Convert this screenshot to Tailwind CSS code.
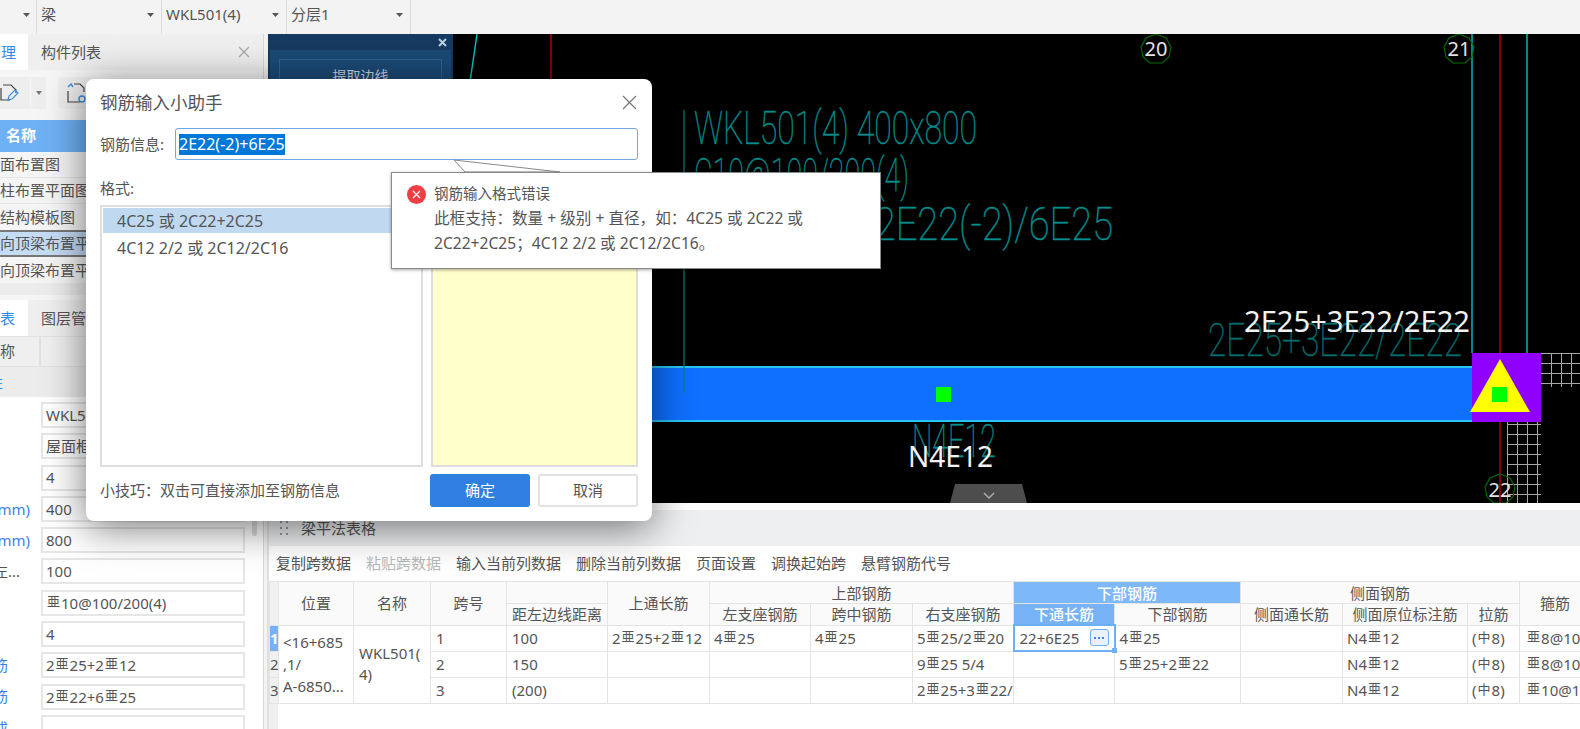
<!DOCTYPE html>
<html lang="zh-CN">
<head>
<meta charset="UTF-8">
<title>钢筋输入小助手</title>
<script src="https://cdn.jsdelivr.net/npm/@tailwindcss/browser@4"></script>
</head>
<body class="m-0 bg-white">
<div class="relative w-[1580px] h-[729px] overflow-hidden flex flex-col bg-[#f3f3f3] text-[#555] text-[15px] [font-family:'Noto_Sans','Noto_Sans_CJK_SC',sans-serif]">

  <!-- top selectors -->
  <div class="h-[34px] shrink-0 flex bg-[#f3f3f3] pl-[36px]">
    <div class="w-[125px] border-l border-[#dcdcdc] flex items-center justify-between pl-[4px] pr-[7px] pb-[5px]"><span>梁</span><svg width="7" height="4" viewBox="0 0 7 4"><path d="M0 0h7L3.5 4z" fill="#555"/></svg></div>
    <div class="w-[125px] border-l border-[#dcdcdc] flex items-center justify-between pl-[4px] pr-[7px] pb-[5px]"><span>WKL501(4)</span><svg width="7" height="4" viewBox="0 0 7 4"><path d="M0 0h7L3.5 4z" fill="#555"/></svg></div>
    <div class="w-[125px] border-x border-[#dcdcdc] flex items-center justify-between pl-[4px] pr-[7px] pb-[5px]"><span>分层1</span><svg width="7" height="4" viewBox="0 0 7 4"><path d="M0 0h7L3.5 4z" fill="#555"/></svg></div>
    <svg class="absolute left-[23px] top-[13px]" width="7" height="4" viewBox="0 0 7 4"><path d="M0 0h7L3.5 4z" fill="#555"/></svg>
  </div>

  <div class="flex-1 flex min-h-0">
    <!-- left panel -->
    <aside class="w-[264px] shrink-0 flex flex-col bg-[#f5f5f5] border-r border-[#d8d8d8] overflow-hidden">
      <div class="h-[36px] shrink-0 flex items-center bg-[#efefef]">
        <div class="w-[28px] h-full bg-white flex items-center justify-end text-[#2e8be8] pr-[13px] overflow-hidden"><span class="-mr-[1px]">理</span></div>
        <span class="ml-[13px] flex-1">构件列表</span>
        <svg class="mr-[13px]" width="12" height="12" viewBox="0 0 12 12"><path d="M1 1l10 10M11 1L1 11" stroke="#aaa" stroke-width="1.3"/></svg>
      </div>
      <div class="h-[50px] shrink-0 flex items-center gap-[1px] bg-[#f5f5f5] pb-[4px]">
        <div class="w-[30px] h-[32px] bg-[#eee] flex items-center justify-end pr-[11px]">
          <svg width="19" height="18" viewBox="0 0 19 18" fill="none"><path d="M1 4v12h9M3 1h8l5 5v3" stroke="#444" stroke-width="1.2"/><path d="M8 16l1-4 6-6 3 3-6 6z" stroke="#3d8fe0" stroke-width="1.2"/></svg>
        </div>
        <div class="w-[15px] h-[32px] bg-[#eee] flex items-center justify-center"><svg width="6" height="4" viewBox="0 0 6 4"><path d="M0 0h6L3 4z" fill="#777"/></svg></div>
        <div class="ml-[11px] w-[40px] h-[32px] bg-[#eee] rounded-sm flex items-center pl-[9px]">
          <svg width="20" height="20" viewBox="0 0 20 20" fill="none"><path d="M1 8v11h12M7 1h6l4 4v4" stroke="#444" stroke-width="1.2"/><path d="M1 4l3-3 2 3" stroke="#3d8fe0" stroke-width="1.4"/><circle cx="15" cy="16" r="3" stroke="#3d8fe0" stroke-width="1.4"/></svg>
        </div>
      </div>
      <div class="h-[32px] shrink-0 bg-[#6fb1f5] text-white font-bold flex items-center pl-[6px] pb-[2px]">名称</div>
      <div class="h-[26px] shrink-0 flex items-center whitespace-nowrap border-b border-[#e6e6e6]">面布置图</div>
      <div class="h-[26px] shrink-0 flex items-center whitespace-nowrap border-b border-[#e6e6e6]">柱布置平面图</div>
      <div class="h-[26px] shrink-0 flex items-center whitespace-nowrap">结构模板图</div>
      <div class="h-[27px] shrink-0 flex items-center whitespace-nowrap bg-[#c5dcf5] border-y-2 border-[#777]">向顶梁布置平面图</div>
      <div class="h-[26px] shrink-0 flex items-center whitespace-nowrap">向顶梁布置平面图</div>
      <div class="h-[12px] shrink-0 bg-[#ececec]"></div>
      <div class="h-[36px] shrink-0 mt-[5px] flex items-center bg-[#efefef]">
        <div class="w-[28px] h-full bg-white text-[#2e8be8] flex items-center"><span>表</span></div>
        <span class="ml-[13px]">图层管理</span>
      </div>
      <div class="h-[31px] shrink-0 flex bg-[#efefef] border-y border-[#e2e2e2]">
        <div class="w-[41px] border-r-2 border-[#e2e2e2] flex items-center">称</div>
        <div class="flex-1"></div>
      </div>
      <div class="h-[30px] shrink-0 bg-[#ececec] flex items-center text-[#2e8be8]"><span class="-ml-[12px]">性</span></div>
      <div class="relative flex-1 bg-white pt-[5px] flex flex-col gap-[5.3px] pr-[18px]">
        <div class="flex h-[26px] shrink-0"><div class="w-[41px]"></div><div class="flex-1 border-2 border-[#e6e6e6] flex items-center pl-[3px]">WKL501(4)</div></div>
        <div class="flex h-[26px] shrink-0"><div class="w-[41px]"></div><div class="flex-1 border-2 border-[#e6e6e6] flex items-center pl-[3px]">屋面框架梁</div></div>
        <div class="flex h-[26px] shrink-0"><div class="w-[41px]"></div><div class="flex-1 border-2 border-[#e6e6e6] flex items-center pl-[3px]">4</div></div>
        <div class="flex h-[26px] shrink-0"><div class="w-[41px] overflow-hidden flex items-center justify-end pr-[11px] text-[#3d7fe8] whitespace-nowrap">截面宽度(mm)</div><div class="flex-1 border-2 border-[#e6e6e6] flex items-center pl-[3px]">400</div></div>
        <div class="flex h-[26px] shrink-0"><div class="w-[41px] overflow-hidden flex items-center justify-end pr-[11px] text-[#3d7fe8] whitespace-nowrap">截面高度(mm)</div><div class="flex-1 border-2 border-[#e6e6e6] flex items-center pl-[3px]">800</div></div>
        <div class="flex h-[26px] shrink-0"><div class="w-[41px] overflow-hidden flex items-center justify-end pr-[21px] whitespace-nowrap">轴线距梁左...</div><div class="flex-1 border-2 border-[#e6e6e6] flex items-center pl-[3px]">100</div></div>
        <div class="flex h-[26px] shrink-0"><div class="w-[41px]"></div><div class="flex-1 border-2 border-[#e6e6e6] pl-[3px] leading-[22px] whitespace-nowrap"><span class="text-[13px] px-[1px] leading-none align-[3px]">亜</span>10@100/200(4)</div></div>
        <div class="flex h-[26px] shrink-0"><div class="w-[41px]"></div><div class="flex-1 border-2 border-[#e6e6e6] flex items-center pl-[3px]">4</div></div>
        <div class="flex h-[26px] shrink-0"><div class="w-[41px] overflow-hidden flex items-center justify-end pr-[33px] text-[#3d7fe8] whitespace-nowrap">上部通长筋</div><div class="flex-1 border-2 border-[#e6e6e6] pl-[3px] leading-[22px] whitespace-nowrap">2<span class="text-[13px] px-[1px] leading-none align-[3px]">亜</span>25+2<span class="text-[13px] px-[1px] leading-none align-[3px]">亜</span>12</div></div>
        <div class="flex h-[26px] shrink-0"><div class="w-[41px] overflow-hidden flex items-center justify-end pr-[33px] text-[#3d7fe8] whitespace-nowrap">下部通长筋</div><div class="flex-1 border-2 border-[#e6e6e6] pl-[3px] leading-[22px] whitespace-nowrap">2<span class="text-[13px] px-[1px] leading-none align-[3px]">亜</span>22+6<span class="text-[13px] px-[1px] leading-none align-[3px]">亜</span>25</div></div>
        <div class="flex h-[26px] shrink-0"><div class="w-[41px] overflow-hidden flex items-center justify-end pr-[33px] text-[#3d7fe8] whitespace-nowrap">侧面构造戒</div><div class="flex-1 border-2 border-[#e6e6e6]"></div></div>
        <div class="absolute left-[252px] top-[123px] w-[5px] h-[16px] bg-[#ddd] rounded"></div>
      </div>
    </aside>

    <div class="flex-1 flex flex-col min-w-0 pl-[3px]">
      <!-- drawing area -->
      <div class="h-[469px] shrink-0 flex pl-[1px] bg-[#f0f0f0]">
        <div class="w-[185px] shrink-0 bg-[#1b4a76] border-x-2 border-[#123a66]">
          <div class="h-[16px] bg-[#163a60] flex items-center justify-end pr-[4px]"><svg width="9" height="9" viewBox="0 0 9 9"><path d="M1 1l7 7M8 1L1 8" stroke="#b8cfe6" stroke-width="2"/></svg></div>
          <div class="mt-[9px] mx-[9px] h-[40px] border border-[#2e6394] text-center text-[#c5d5e6] text-[14px] pt-[5px]">提取边线</div>
        </div>
        <svg class="bg-black shrink-0" viewBox="453 34 1127 469" width="1127" height="469">
          <line x1="477" y1="34" x2="470" y2="82" stroke="#00c0c0" stroke-width="1.5"/>
          <line x1="551" y1="34" x2="551" y2="90" stroke="#b00000" stroke-width="1.5"/>
          <line x1="684" y1="110" x2="684" y2="393" stroke="#008080" stroke-width="1.2"/>
          <g font-family="Roboto, sans-serif" font-weight="100" fill="#009090" stroke="#008a8a" stroke-width="0.5">
            <text x="694" y="144" font-size="47" textLength="283" lengthAdjust="spacingAndGlyphs">WKL501(4) 400x800</text>
            <text x="694" y="191" font-size="47" textLength="215" lengthAdjust="spacingAndGlyphs">C10@100/200(4)</text>
            <text x="868" y="240" font-size="47" textLength="245" lengthAdjust="spacingAndGlyphs">;2E22(-2)/6E25</text>
            <text x="1208" y="356" font-size="47" textLength="254" lengthAdjust="spacingAndGlyphs" fill="#007070" stroke="#006a6a">2E25+3E22/2E22</text>
            <text x="912" y="457" font-size="47" textLength="84" lengthAdjust="spacingAndGlyphs">N4E12</text>
          </g>
          <line x1="1472" y1="34" x2="1472" y2="353" stroke="#00b4c0" stroke-width="1.5"/>
          <line x1="1527" y1="34" x2="1527" y2="353" stroke="#00b4c0" stroke-width="1.5"/>
          <line x1="1500" y1="34" x2="1500" y2="503" stroke="#a80000" stroke-width="1.5"/>
          <path d="M1541 353.5h39M1541 363.5h39M1541 373.5h39M1541 383.5h39M1551.5 353v34M1561.5 353v34M1571.5 353v34M1507.5 422v81M1517.5 422v81M1527.5 422v81M1537.5 422v81M1507 424.5h34M1507 434.5h34M1507 444.5h34M1507 454.5h34M1507 464.5h34M1507 474.5h34M1507 484.5h34M1507 494.5h34" stroke="#a8a8a8" stroke-width="1" fill="none"/>
          <rect x="453" y="366" width="1019" height="56" fill="#0f6fff"/>
          <rect x="453" y="366" width="1019" height="2" fill="#2ac4ee"/>
          <rect x="453" y="420" width="1019" height="2" fill="#2ac4ee"/>
          <line x1="684" y1="366" x2="684" y2="393" stroke="#008080" stroke-width="1.2"/>
          <rect x="936" y="387" width="15" height="15" fill="#00ff00"/>
          <rect x="1472" y="353" width="69" height="69" fill="#8f00ff"/>
          <polygon points="1500,359 1530,412 1470,412" fill="#ffff00"/>
          <rect x="1492" y="387" width="15" height="15" fill="#00ff00"/>
          <g fill="none" stroke="#006a00" stroke-width="1.2">
            <polygon transform="translate(1156 49)" points="0,-15 10,-11 15,-2 13,8 6,14 -6,14 -13,8 -15,-2 -10,-11"/>
            <polygon transform="translate(1459 49)" points="0,-15 10,-11 15,-2 13,8 6,14 -6,14 -13,8 -15,-2 -10,-11"/>
            <polygon transform="translate(1500 489)" points="0,-15 10,-11 15,-2 13,8 6,14 -6,14 -13,8 -15,-2 -10,-11"/>
          </g>
          <g font-family="'Noto Sans', sans-serif" fill="#e4e4e4">
            <text x="1156" y="56" font-size="20" text-anchor="middle">20</text>
            <text x="1459" y="56" font-size="20" text-anchor="middle">21</text>
            <text x="1500" y="497" font-size="20" text-anchor="middle">22</text>
            <text x="1244" y="332" font-size="29" textLength="226" lengthAdjust="spacingAndGlyphs" fill="#f2f2f2">2E25+3E22/2E22</text>
            <text x="908" y="467" font-size="29" textLength="85" lengthAdjust="spacingAndGlyphs" fill="#f2f2f2">N4E12</text>
          </g>
          <polygon points="950,503 955,484 1022,484 1027,503" fill="#4d4d4d"/>
          <path d="M984 493l5 5 5-5" stroke="#aaa" stroke-width="1.5" fill="none"/>
        </svg>
      </div>

      <!-- beam table panel -->
      <div class="flex-1 min-h-0 flex flex-col bg-white border-l-2 border-[#e0e0e0]">
        <div class="h-[7px] shrink-0 bg-white"></div>
        <div class="h-[36px] shrink-0 bg-[#eeeff1] flex items-center pl-[11px]">
          <svg width="8" height="15" viewBox="0 0 8 15" fill="#999"><rect x="0" y="0" width="2" height="2"/><rect x="6" y="0" width="2" height="2"/><rect x="0" y="6" width="2" height="2"/><rect x="6" y="6" width="2" height="2"/><rect x="0" y="12" width="2" height="2"/><rect x="6" y="12" width="2" height="2"/></svg>
          <span class="ml-[13px]">梁平法表格</span>
        </div>
        <div class="h-[35px] shrink-0 flex items-center gap-[15px] pl-[7px] whitespace-nowrap bg-white">
          <span>复制跨数据</span><span class="text-[#b9b9b9]">粘贴跨数据</span><span>输入当前列数据</span><span>删除当前列数据</span><span>页面设置</span><span>调换起始跨</span><span>悬臂钢筋代号</span>
        </div>
        <div class="flex-1 min-h-0 overflow-hidden">
          <table class="table-fixed border-collapse w-[1392px] text-[15px] text-[#555]">
            <colgroup>
              <col class="w-[9px]"><col class="w-[75px]"><col class="w-[77px]"><col class="w-[76px]"><col class="w-[101px]"><col class="w-[102px]"><col class="w-[101px]"><col class="w-[102px]"><col class="w-[101px]"><col class="w-[101px]"><col class="w-[126px]"><col class="w-[102px]"><col class="w-[125px]"><col class="w-[52px]"><col class="w-[142px]">
            </colgroup>
            <thead class="font-normal">
              <tr class="h-[22px]">
                <th rowspan="2" class="border border-[#e4e4e4] bg-[#f0f0f0] font-normal"></th>
                <th rowspan="2" class="border border-[#e4e4e4] bg-[#fafafa] font-normal">位置</th>
                <th rowspan="2" class="border border-[#e4e4e4] bg-[#fafafa] font-normal">名称</th>
                <th rowspan="2" class="border border-[#e4e4e4] bg-[#fafafa] font-normal">跨号</th>
                <th class="border border-[#e4e4e4] bg-[#fafafa] font-normal"></th>
                <th rowspan="2" class="border border-[#e4e4e4] bg-[#fafafa] font-normal">上通长筋</th>
                <th colspan="3" class="border border-[#e4e4e4] bg-[#fafafa] font-normal leading-[20px]">上部钢筋</th>
                <th colspan="2" class="border border-[#e4e4e4] bg-[#7db8f9] text-white font-medium leading-[20px]">下部钢筋</th>
                <th colspan="3" class="border border-[#e4e4e4] bg-[#fafafa] font-normal leading-[20px]">侧面钢筋</th>
                <th rowspan="2" class="border border-[#e4e4e4] bg-[#fafafa] font-normal text-left pl-[20px]">箍筋</th>
              </tr>
              <tr class="h-[20px] leading-[20px]">
                <th class="border border-[#e4e4e4] bg-[#fafafa] font-normal whitespace-nowrap">距左边线距离</th>
                <th class="border border-[#e4e4e4] bg-[#fafafa] font-normal">左支座钢筋</th>
                <th class="border border-[#e4e4e4] bg-[#fafafa] font-normal">跨中钢筋</th>
                <th class="border border-[#e4e4e4] bg-[#fafafa] font-normal">右支座钢筋</th>
                <th class="border border-[#e4e4e4] bg-[#76b2f5] text-white font-medium">下通长筋</th>
                <th class="border border-[#e4e4e4] bg-[#fafafa] font-normal">下部钢筋</th>
                <th class="border border-[#e4e4e4] bg-[#fafafa] font-normal">侧面通长筋</th>
                <th class="border border-[#e4e4e4] bg-[#fafafa] font-normal">侧面原位标注筋</th>
                <th class="border border-[#e4e4e4] bg-[#fafafa] font-normal">拉筋</th>
              </tr>
            </thead>
            <tbody class="leading-[20px]">
              <tr class="h-[26px]">
                <td class="border border-[#e4e4e4] bg-[#76b2f5] text-white text-center p-0 font-bold">1</td>
                <td rowspan="3" class="border border-[#e4e4e4] pl-[4px] leading-[22px] whitespace-nowrap">&lt;16+685<br>,1/<br>A-6850...</td>
                <td rowspan="3" class="border border-[#e4e4e4] pl-[5px] leading-[21px]">WKL501(<br>4)</td>
                <td class="border border-[#e4e4e4] pl-[5px]">1</td>
                <td class="border border-[#e4e4e4] pl-[5px]">100</td>
                <td class="border border-[#e4e4e4] pl-[4px] whitespace-nowrap overflow-hidden">2<span class="text-[13px] px-[1px] leading-none align-[3px]">亜</span>25+2<span class="text-[13px] px-[1px] leading-none align-[3px]">亜</span>12</td>
                <td class="border border-[#e4e4e4] pl-[4px]">4<span class="text-[13px] px-[1px] leading-none align-[3px]">亜</span>25</td>
                <td class="border border-[#e4e4e4] pl-[4px]">4<span class="text-[13px] px-[1px] leading-none align-[3px]">亜</span>25</td>
                <td class="border border-[#e4e4e4] pl-[4px] whitespace-nowrap overflow-hidden">5<span class="text-[13px] px-[1px] leading-none align-[3px]">亜</span>25/2<span class="text-[13px] px-[1px] leading-none align-[3px]">亜</span>20</td>
                <td class="relative border-2 border-[#6db0f5] pl-[5px]">22+6E25
                  <div class="absolute right-[5px] top-[3px] w-[19px] h-[17px] rounded-[3px] border border-[#6db0f5] bg-[#e8f1fc] flex items-center justify-center gap-[2px]"><i class="block w-[2px] h-[2px] bg-[#3d7fe8]"></i><i class="block w-[2px] h-[2px] bg-[#3d7fe8]"></i><i class="block w-[2px] h-[2px] bg-[#3d7fe8]"></i></div>
                  <div class="absolute -right-[3px] -bottom-[3px] w-[5px] h-[5px] bg-[#6db0f5]"></div>
                </td>
                <td class="border border-[#e4e4e4] pl-[4px]">4<span class="text-[13px] px-[1px] leading-none align-[3px]">亜</span>25</td>
                <td class="border border-[#e4e4e4]"></td>
                <td class="border border-[#e4e4e4] pl-[4px]">N4<span class="text-[13px] px-[1px] leading-none align-[3px]">亜</span>12</td>
                <td class="border border-[#e4e4e4] pl-[4px] whitespace-nowrap">(<span class="text-[13px] px-[1px] leading-none align-[2px]">中</span>8)</td>
                <td class="border border-[#e4e4e4] pl-[6px] whitespace-nowrap"><span class="text-[13px] px-[1px] leading-none align-[3px]">亜</span>8@100/200(4)</td>
              </tr>
              <tr class="h-[26px]">
                <td class="border border-[#e4e4e4] bg-[#f0f0f0] text-center p-0">2</td>
                <td class="border border-[#e4e4e4] pl-[5px]">2</td>
                <td class="border border-[#e4e4e4] pl-[5px]">150</td>
                <td class="border border-[#e4e4e4]"></td>
                <td class="border border-[#e4e4e4]"></td>
                <td class="border border-[#e4e4e4]"></td>
                <td class="border border-[#e4e4e4] pl-[4px] whitespace-nowrap overflow-hidden">9<span class="text-[13px] px-[1px] leading-none align-[3px]">亜</span>25 5/4</td>
                <td class="border border-[#e4e4e4]"></td>
                <td class="border border-[#e4e4e4] pl-[4px] whitespace-nowrap">5<span class="text-[13px] px-[1px] leading-none align-[3px]">亜</span>25+2<span class="text-[13px] px-[1px] leading-none align-[3px]">亜</span>22</td>
                <td class="border border-[#e4e4e4]"></td>
                <td class="border border-[#e4e4e4] pl-[4px]">N4<span class="text-[13px] px-[1px] leading-none align-[3px]">亜</span>12</td>
                <td class="border border-[#e4e4e4] pl-[4px] whitespace-nowrap">(<span class="text-[13px] px-[1px] leading-none align-[2px]">中</span>8)</td>
                <td class="border border-[#e4e4e4] pl-[6px] whitespace-nowrap"><span class="text-[13px] px-[1px] leading-none align-[3px]">亜</span>8@100/200(4)</td>
              </tr>
              <tr class="h-[26px]">
                <td class="border border-[#e4e4e4] bg-[#f0f0f0] text-center p-0">3</td>
                <td class="border border-[#e4e4e4] pl-[5px]">3</td>
                <td class="border border-[#e4e4e4] pl-[5px]">(200)</td>
                <td class="border border-[#e4e4e4]"></td>
                <td class="border border-[#e4e4e4]"></td>
                <td class="border border-[#e4e4e4]"></td>
                <td class="border border-[#e4e4e4] pl-[4px] whitespace-nowrap overflow-hidden">2<span class="text-[13px] px-[1px] leading-none align-[3px]">亜</span>25+3<span class="text-[13px] px-[1px] leading-none align-[3px]">亜</span>22/2<span class="text-[13px] px-[1px] leading-none align-[3px]">亜</span>22</td>
                <td class="border border-[#e4e4e4]"></td>
                <td class="border border-[#e4e4e4]"></td>
                <td class="border border-[#e4e4e4]"></td>
                <td class="border border-[#e4e4e4] pl-[4px]">N4<span class="text-[13px] px-[1px] leading-none align-[3px]">亜</span>12</td>
                <td class="border border-[#e4e4e4] pl-[4px] whitespace-nowrap">(<span class="text-[13px] px-[1px] leading-none align-[2px]">中</span>8)</td>
                <td class="border border-[#e4e4e4] pl-[6px] whitespace-nowrap"><span class="text-[13px] px-[1px] leading-none align-[3px]">亜</span>10@100/200(4)</td>
              </tr>
            </tbody>
          </table>
          <div class="w-[9px] h-[40px] bg-[#f0f0f0]"></div>
        </div>
      </div>
    </div>
  </div>

  <!-- dialog -->
  <div class="absolute left-[86px] top-[79px] w-[566px] h-[442px] bg-white rounded-[8px] shadow-[0_6px_40px_rgba(0,0,0,0.55)] pl-[14px] pr-[14px] pt-[11px] flex flex-col">
    <div class="h-[25px] shrink-0 flex items-center justify-between">
      <span class="text-[17.5px]">钢筋输入小助手</span>
      <svg class="mr-[1px]" width="15" height="15" viewBox="0 0 15 15"><path d="M1 1l13 13M14 1L1 14" stroke="#777" stroke-width="1.2"/></svg>
    </div>
    <div class="mt-[13px] h-[32px] shrink-0 flex items-center">
      <span class="w-[75px] shrink-0">钢筋信息:</span>
      <div class="flex-1 h-full border-[1.5px] border-[#6fa9ea] rounded-[3px] flex items-center pl-[3px]"><span class="bg-[#0078d7] text-white text-[16px] leading-[21px]">2E22(-2)+6E25</span></div>
    </div>
    <div class="mt-[17px] h-[22px] shrink-0 flex items-center">格式:</div>
    <div class="mt-[6px] h-[262px] shrink-0 flex gap-[8px]">
      <div class="w-[323px] border-2 border-[#dedede] p-[1px] text-[16px]">
        <div class="h-[25px] bg-[#c0d8f0] pl-[14px] flex items-center">4C25 或 2C22+2C25</div>
        <div class="h-[28px] pl-[14px] flex items-center mt-[1px]">4C12 2/2 或 2C12/2C16</div>
      </div>
      <div class="flex-1 bg-[#ffffcc] border-2 border-[#dedede]"></div>
    </div>
    <div class="mt-[7px] h-[33px] shrink-0 flex items-center">
      <span class="flex-1">小技巧：双击可直接添加至钢筋信息</span>
      <button class="w-[100px] h-full bg-[#2e7fe0] text-white rounded-[3px]">确定</button>
      <button class="ml-[8px] w-[100px] h-full bg-white border-2 border-[#e2e2e2] rounded-[3px]">取消</button>
    </div>

    <!-- validation tooltip -->
    <svg class="absolute left-[367px] top-[80px]" width="110" height="14" viewBox="0 0 110 14"><polygon points="1,1 12,13 107,13" fill="#fff" stroke="#8a8a8a" stroke-width="1"/><rect x="12" y="13" width="95" height="1" fill="#fff"/></svg>
    <div class="absolute left-[305px] top-[93px] w-[490px] h-[97px] bg-white border border-[#8a8a8a] shadow-[0_1px_3px_rgba(0,0,0,0.35)] pl-[42px] pt-[8px]">
      <div class="absolute left-[15px] top-[12px] w-[19px] h-[19px] rounded-full bg-[#ef3f44] flex items-center justify-center"><svg width="9" height="9" viewBox="0 0 9 9"><path d="M1 1l7 7M8 1L1 8" stroke="#fff" stroke-width="1.2"/></svg></div>
      <div class="leading-[25px] text-[14.5px]">钢筋输入格式错误</div>
      <div class="leading-[25px] text-[15.6px] whitespace-nowrap">此框支持：数量 + 级别 + 直径，如：4C25 或 2C22 或</div>
      <div class="leading-[25px] text-[15.6px] whitespace-nowrap">2C22+2C25；4C12 2/2 或 2C12/2C16。</div>
    </div>
  </div>
</div>
</body>
</html>
